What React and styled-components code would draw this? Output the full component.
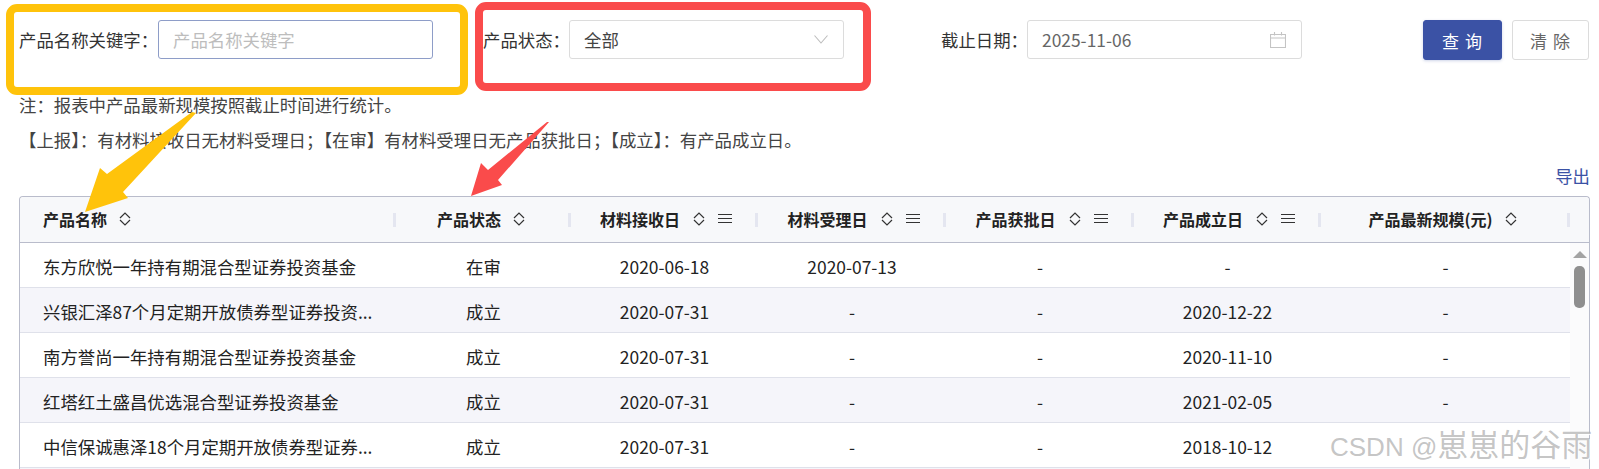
import React from "react";
import styled, { createGlobalStyle } from "styled-components";

const Global = createGlobalStyle`
  html, body { margin: 0; padding: 0; background: #fff; overflow: hidden; }
  * { box-sizing: border-box; }
`;

const font = `"Noto Sans CJK SC", "Noto Sans", sans-serif`;
const COLS = "376px 175px 187px 188px 188px 187px 249px";
const C = "\uFF1A";
const S = "\uFF1B";

const Page = styled.div`
  position: relative;
  width: 1599px;
  height: 469px;
  overflow: hidden;
  padding: 20px 9px 0 19px;
  font-family: ${font};
  font-size: 17.4px;
  color: #333;
  background: #fff;
`;
const FilterBar = styled.div`
  display: flex;
  align-items: flex-start;
  height: 40px;
`;
const Field = styled.div`
  display: flex;
  align-items: center;
  height: 39px;
  margin-left: ${(p) => p.$offset || 0}px;
`;
const Label = styled.label`
  width: ${(p) => p.$width}px;
  white-space: nowrap;
  color: #333;
  line-height: 39px;
`;
const TextInput = styled.input`
  width: 275px;
  height: 39px;
  padding: 0 14px;
  border: 1px solid #8e9dc8;
  border-radius: 3px;
  font: inherit;
  color: #333;
  outline: none;
  &::placeholder { color: #bdbdbd; opacity: 1; }
`;
const Box = styled.div`
  display: flex;
  align-items: center;
  justify-content: space-between;
  width: 275px;
  height: 39px;
  padding: 0 15px 0 14px;
  border: 1px solid #dcdcdc;
  border-radius: 3px;
  color: ${(p) => p.$color || "#444"};
`;
const Actions = styled.div`
  display: flex;
  gap: 10px;
  margin-left: auto;
  margin-right: 1px;
`;
const Button = styled.button`
  width: ${(p) => p.$width}px;
  height: 40px;
  border-radius: 3px;
  border: 1px solid ${(p) => (p.$primary ? "#3b52a5" : "#dcdcdc")};
  background: ${(p) => (p.$primary ? "#3b52a5" : "#fff")};
  color: ${(p) => (p.$primary ? "#fff" : "#666")};
  font: inherit;
  font-size: 17px;
  letter-spacing: 1px;
  padding: 0;
  box-shadow: ${(p) => (p.$primary ? "0 1px 3px rgba(59,82,165,.25)" : "none")};
`;
const Note = styled.p`
  margin: ${(p) => p.$top}px 0 0;
  line-height: 24px;
  height: 24px;
  color: #444;
  white-space: nowrap;
`;
const ExportRow = styled.div`
  display: flex;
  justify-content: flex-end;
  margin-top: 12px;
  height: 24px;
  line-height: 24px;
`;
const ExportLink = styled.a`
  color: #3b52a5;
`;
const Table = styled.div`
  margin-top: 8px;
  width: 1571px;
  border: 1px solid #b9bccb;
  border-bottom: 0;
  border-radius: 4px 4px 0 0;
`;
const HeadRow = styled.div`
  display: grid;
  grid-template-columns: ${COLS} 1fr;
  height: 46px;
  background: #f7f8fa;
  border-bottom: 1px solid #b9bccb;
  border-radius: 4px 4px 0 0;
`;
const HeadCell = styled.div`
  position: relative;
  display: flex;
  align-items: center;
  justify-content: ${(p) => (p.$left ? "flex-start" : "center")};
  padding-left: ${(p) => (p.$left ? 23 : p.$pushRight || 0)}px;
  padding-right: ${(p) => p.$pushLeft || 0}px;
  padding-bottom: 1px;
  font-size: 16px;
  font-weight: 700;
  color: #222;
  &::after {
    content: "";
    position: absolute;
    right: 0;
    top: 16px;
    width: 3px;
    height: 14px;
    background: #e4e6f0;
  }
`;
const HeadLabel = styled.span`
  margin-right: ${(p) => p.$gap}px;
`;
const HeadIcon = styled.svg`
  display: block;
  flex: none;
  margin-right: ${(p) => p.$gap || 0}px;
`;
const Body = styled.div`
  display: flex;
`;
const Rows = styled.div`
  width: 1550px;
`;
const Row = styled.div`
  display: grid;
  grid-template-columns: ${COLS};
  height: 45px;
  background: ${(p) => (p.$stripe ? "#f5f5fa" : "#fff")};
  border-bottom: 1px solid #dfe1ea;
`;
const Cell = styled.div`
  display: flex;
  align-items: center;
  justify-content: ${(p) => (p.$left ? "flex-start" : "center")};
  padding: 2px 0 0 ${(p) => (p.$left ? "23px" : "0")};
  color: #222;
  white-space: nowrap;
`;
const Scrollbar = styled.div`
  flex: 1;
  display: flex;
  flex-direction: column;
  align-items: center;
  padding-top: 8px;
  background: #fbfbfc;
`;
const ScrollArrow = styled.div`
  width: 0;
  height: 0;
  border-left: 7px solid transparent;
  border-right: 7px solid transparent;
  border-bottom: 7px solid #a3a3a3;
`;
const ScrollThumb = styled.div`
  width: 11px;
  height: 42px;
  margin-top: 8px;
  border-radius: 5px;
  background: #8f8f8f;
`;
const Annotation = styled.div`
  position: absolute;
  left: ${(p) => p.$x}px;
  top: ${(p) => p.$y}px;
  width: ${(p) => p.$w}px;
  height: ${(p) => p.$h}px;
  border: 8px solid ${(p) => p.$color};
  border-radius: 11px;
  pointer-events: none;
`;
const ArrowLayer = styled.svg`
  position: absolute;
  inset: 0;
  pointer-events: none;
`;
const Watermark = styled.div`
  position: absolute;
  left: 1330px;
  top: 422px;
  font-family: "Liberation Sans", "Noto Sans CJK SC", sans-serif;
  font-size: 26px;
  line-height: 42px;
  white-space: nowrap;
  color: rgba(160, 160, 160, 0.62);
  text-shadow: 1px 1px 1px rgba(255, 255, 255, 0.9);
`;
const WatermarkName = styled.span`
  font-family: "Noto Sans CJK SC", sans-serif;
  font-size: 31px;
  font-weight: 400;
`;

const Sort = ({ gap }) => (
  <HeadIcon $gap={gap} width="12" height="16" viewBox="0 0 12 16" fill="none" stroke="#333" strokeWidth="1.2">
    <path d="M1 7 6 2l5 5M1 9l5 5 5-5" />
  </HeadIcon>
);
const Menu = () => (
  <HeadIcon width="14" height="10" viewBox="0 0 14 10" fill="none" stroke="#333" strokeWidth="1">
    <path d="M0 .5h14M0 4.5h14M0 8.5h14" />
  </HeadIcon>
);

const heads = [
  { t: "产品名称", left: true, gap: 12 },
  { t: "产品状态", gap: 12, pushLeft: 5 },
  { t: "材料接收日", gap: 13, menu: true, pushRight: 3 },
  { t: "材料受理日", gap: 13, menu: true, pushRight: 3 },
  { t: "产品获批日", gap: 13, menu: true, pushRight: 3 },
  { t: "产品成立日", gap: 13, menu: true, pushRight: 3 },
  { t: "产品最新规模(元)", gap: 12, pushLeft: 6 },
];
const rows = [
  ["东方欣悦一年持有期混合型证券投资基金", "在审", "2020-06-18", "2020-07-13", "-", "-", "-"],
  ["兴银汇泽87个月定期开放债券型证券投资...", "成立", "2020-07-31", "-", "-", "2020-12-22", "-"],
  ["南方誉尚一年持有期混合型证券投资基金", "成立", "2020-07-31", "-", "-", "2020-11-10", "-"],
  ["红塔红土盛昌优选混合型证券投资基金", "成立", "2020-07-31", "-", "-", "2021-02-05", "-"],
  ["中信保诚惠泽18个月定期开放债券型证券...", "成立", "2020-07-31", "-", "-", "2018-10-12", "-"],
];

export default function App() {
  return (
    <Page>
      <Global />
      <FilterBar>
        <Field>
          <Label $width={139}>{`产品名称关键字${C}`}</Label>
          <TextInput placeholder="产品名称关键字" />
        </Field>
        <Field $offset={50}>
          <Label $width={86}>{`产品状态${C}`}</Label>
          <Box>
            全部
            <svg width="14" height="9" viewBox="0 0 14 9" fill="none" stroke="#bdbdbd" strokeWidth="1.1">
              <path d="M.5.5 7 8 13.5.5" />
            </svg>
          </Box>
        </Field>
        <Field $offset={97}>
          <Label $width={86}>{`截止日期${C}`}</Label>
          <Box $color="#666">
            2025-11-06
            <svg width="16" height="16" viewBox="0 0 16 16" fill="none" stroke="#c4c4c4" strokeWidth="1.1">
              <path d="M.5 2.5h15v13H.5zM.5 6h15M4.5 0v3.5M11.5 0v3.5" />
            </svg>
          </Box>
        </Field>
        <Actions>
          <Button $primary $width={79}>查 询</Button>
          <Button $width={77}>清 除</Button>
        </Actions>
      </FilterBar>
      <Note $top={33}>{`注${C}报表中产品最新规模按照截止时间进行统计。`}</Note>
      <Note $top={11}>{`【上报】${C}有材料接收日无材料受理日${S}【在审】有材料受理日无产品获批日${S}【成立】${C}有产品成立日。`}</Note>
      <ExportRow>
        <ExportLink>导出</ExportLink>
      </ExportRow>
      <Table>
        <HeadRow>
          {heads.map((h) => (
            <HeadCell key={h.t} $left={h.left} $pushLeft={h.pushLeft} $pushRight={h.pushRight}>
              <HeadLabel $gap={h.gap}>{h.t}</HeadLabel>
              <Sort gap={h.menu ? 13 : 0} />
              {h.menu && <Menu />}
            </HeadCell>
          ))}
        </HeadRow>
        <Body>
          <Rows>
            {rows.map((r, i) => (
              <Row key={r[0]} $stripe={i % 2 === 1}>
                {r.map((c, j) => (
                  <Cell key={j} $left={j === 0}>{c}</Cell>
                ))}
              </Row>
            ))}
            <Row $stripe />
          </Rows>
          <Scrollbar>
            <ScrollArrow />
            <ScrollThumb />
          </Scrollbar>
        </Body>
      </Table>
      <Annotation $x={6} $y={4} $w={462} $h={91} $color="#ffc30b" />
      <Annotation $x={475} $y={2} $w={396} $h={89} $color="#fa4b4b" />
      <ArrowLayer width="1599" height="469" viewBox="0 0 1599 469">
        <path fill="#ffc30b" d="M196 113 192 112 107 174 100 168 85 212 128 198 123 192Z" />
        <path fill="#fa4b4b" d="M549 122 547 122 488 170 481 163 471 196 502 185 498 180Z" />
      </ArrowLayer>
      <Watermark>
        CSDN @<WatermarkName>崽崽的谷雨</WatermarkName>
      </Watermark>
    </Page>
  );
}
